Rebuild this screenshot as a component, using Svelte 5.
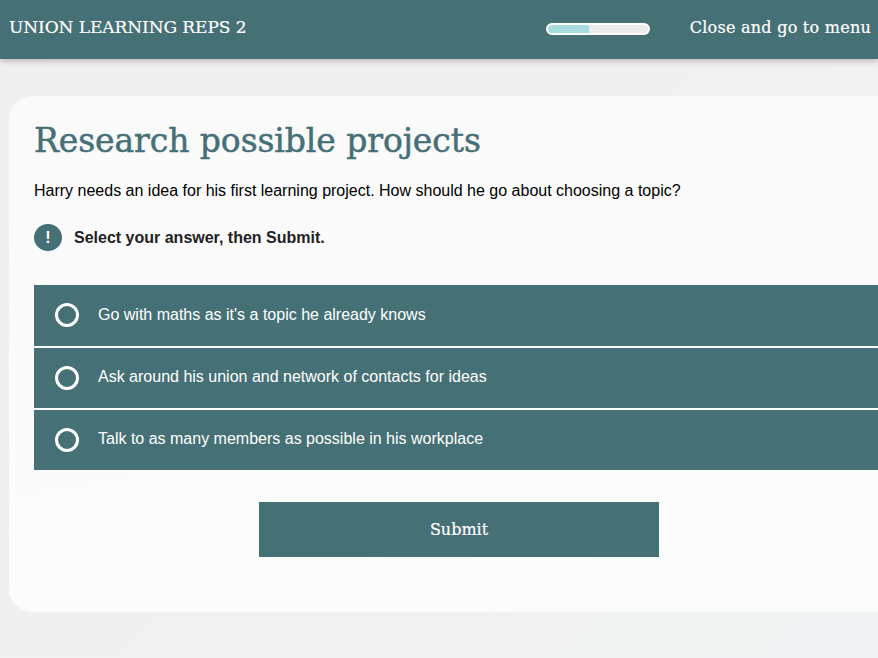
<script lang="ts">
  const options = [
    "Go with maths as it's a topic he already knows",
    "Ask around his union and network of contacts for ideas",
    "Talk to as many members as possible in his workplace",
  ];
</script>

<div class="page">
  <header class="topbar">
    <div class="course">UNION LEARNING REPS 2</div>
    <div class="progress"><div class="fill"></div></div>
    <div class="close">Close and go to menu</div>
  </header>

  <main class="card">
    <h1>Research possible projects</h1>
    <p class="question">Harry needs an idea for his first learning project. How should he go about choosing a topic?</p>

    <div class="instruction">
      <span class="badge">!</span>
      <strong>Select your answer, then Submit.</strong>
    </div>

    <div class="options">
      {#each options as option}
        <div class="option">
          <span class="radio"></span>
          <span class="label">{option}</span>
        </div>
      {/each}
    </div>

    <button class="submit">Submit</button>
  </main>
</div>

<style>
  :global(body) {
    margin: 0;
    overflow: hidden;
    background: #f0f1f1;
  }

  .page {
    width: 878px;
    height: 658px;
    overflow: hidden;
    background: linear-gradient(135deg, #f0f0f0 0%, #f1f1f1 70%, #f0f3f4 100%);
  }

  .topbar {
    display: flex;
    align-items: center;
    height: 59px;
    padding: 0 7px 5px 9px;
    box-sizing: border-box;
    background: #457076;
    color: #fff;
    box-shadow: 0 2px 6px rgba(0, 0, 0, 0.25);
    font-family: "DejaVu Serif", serif;
  }

  .course {
    font-size: 17px;
    letter-spacing: -0.07px;
    margin-right: auto;
    -webkit-text-stroke: 0.2px #fff;
  }

  .progress {
    width: 100px;
    height: 8px;
    border: 2px solid #fff;
    border-radius: 6px;
    background: #ebebeb;
    overflow: hidden;
    margin-top: 4px;
  }

  .fill {
    width: 41%;
    height: 100%;
    background-color: #a8dbde;
    background-image: radial-gradient(#93c9cc 0.5px, transparent 0.7px);
    background-size: 6px 4px;
  }

  .close {
    margin-left: 40px;
    font-size: 16px;
    letter-spacing: 0.25px;
    -webkit-text-stroke: 0.2px #fff;
  }

  .card {
    box-sizing: border-box;
    width: 900px;
    height: 516px;
    margin: 37px 0 0 9px;
    padding: 25px;
    border-radius: 24px;
    background: linear-gradient(170deg, #fafafa 0%, #fbfbfb 50%, #fbfcfc 100%);
  }

  h1 {
    margin: 0;
    font-family: "DejaVu Serif", serif;
    font-weight: 400;
    font-size: 33px;
    line-height: 40px;
    letter-spacing: -0.08px;
    color: #457076;
    -webkit-text-stroke: 0.5px #457076;
  }

  .question {
    margin: 20px 0 0;
    font-family: "Liberation Sans", Arial, sans-serif;
    font-size: 16px;
    line-height: 20px;
    color: #000;
  }

  .instruction {
    display: flex;
    align-items: center;
    gap: 12px;
    margin-top: 23px;
    font-family: "Liberation Sans", Arial, sans-serif;
    font-size: 16px;
    color: #222;
  }

  .badge {
    display: flex;
    align-items: center;
    justify-content: center;
    width: 28px;
    height: 27px;
    border-radius: 50%;
    background: #457076;
    color: #fff;
    font-weight: 700;
    font-size: 16px;
  }

  .options {
    display: flex;
    flex-direction: column;
    gap: 2px;
    margin-top: 34px;
  }

  .option {
    display: flex;
    align-items: center;
    gap: 19px;
    height: 60px;
    padding-left: 21px;
    background: #457076;
    color: #fff;
    font-family: "Liberation Sans", Arial, sans-serif;
    font-size: 16px;
  }

  .option:first-child {
    height: 61px;
  }

  .option:first-child .radio {
    margin-bottom: 1px;
  }

  .option:first-child .label {
    padding-bottom: 2px;
  }

  .label {
    padding-bottom: 3px;
  }

  .radio {
    box-sizing: border-box;
    width: 24px;
    height: 24px;
    border: 3px solid #fff;
    border-radius: 50%;
  }

  .submit {
    display: block;
    width: 400px;
    height: 55px;
    margin: 32px auto 0;
    border: 0;
    background: #457076;
    color: #fff;
    font-family: "DejaVu Serif", serif;
    font-size: 16px;
    -webkit-text-stroke: 0.2px #fff;
  }
</style>
